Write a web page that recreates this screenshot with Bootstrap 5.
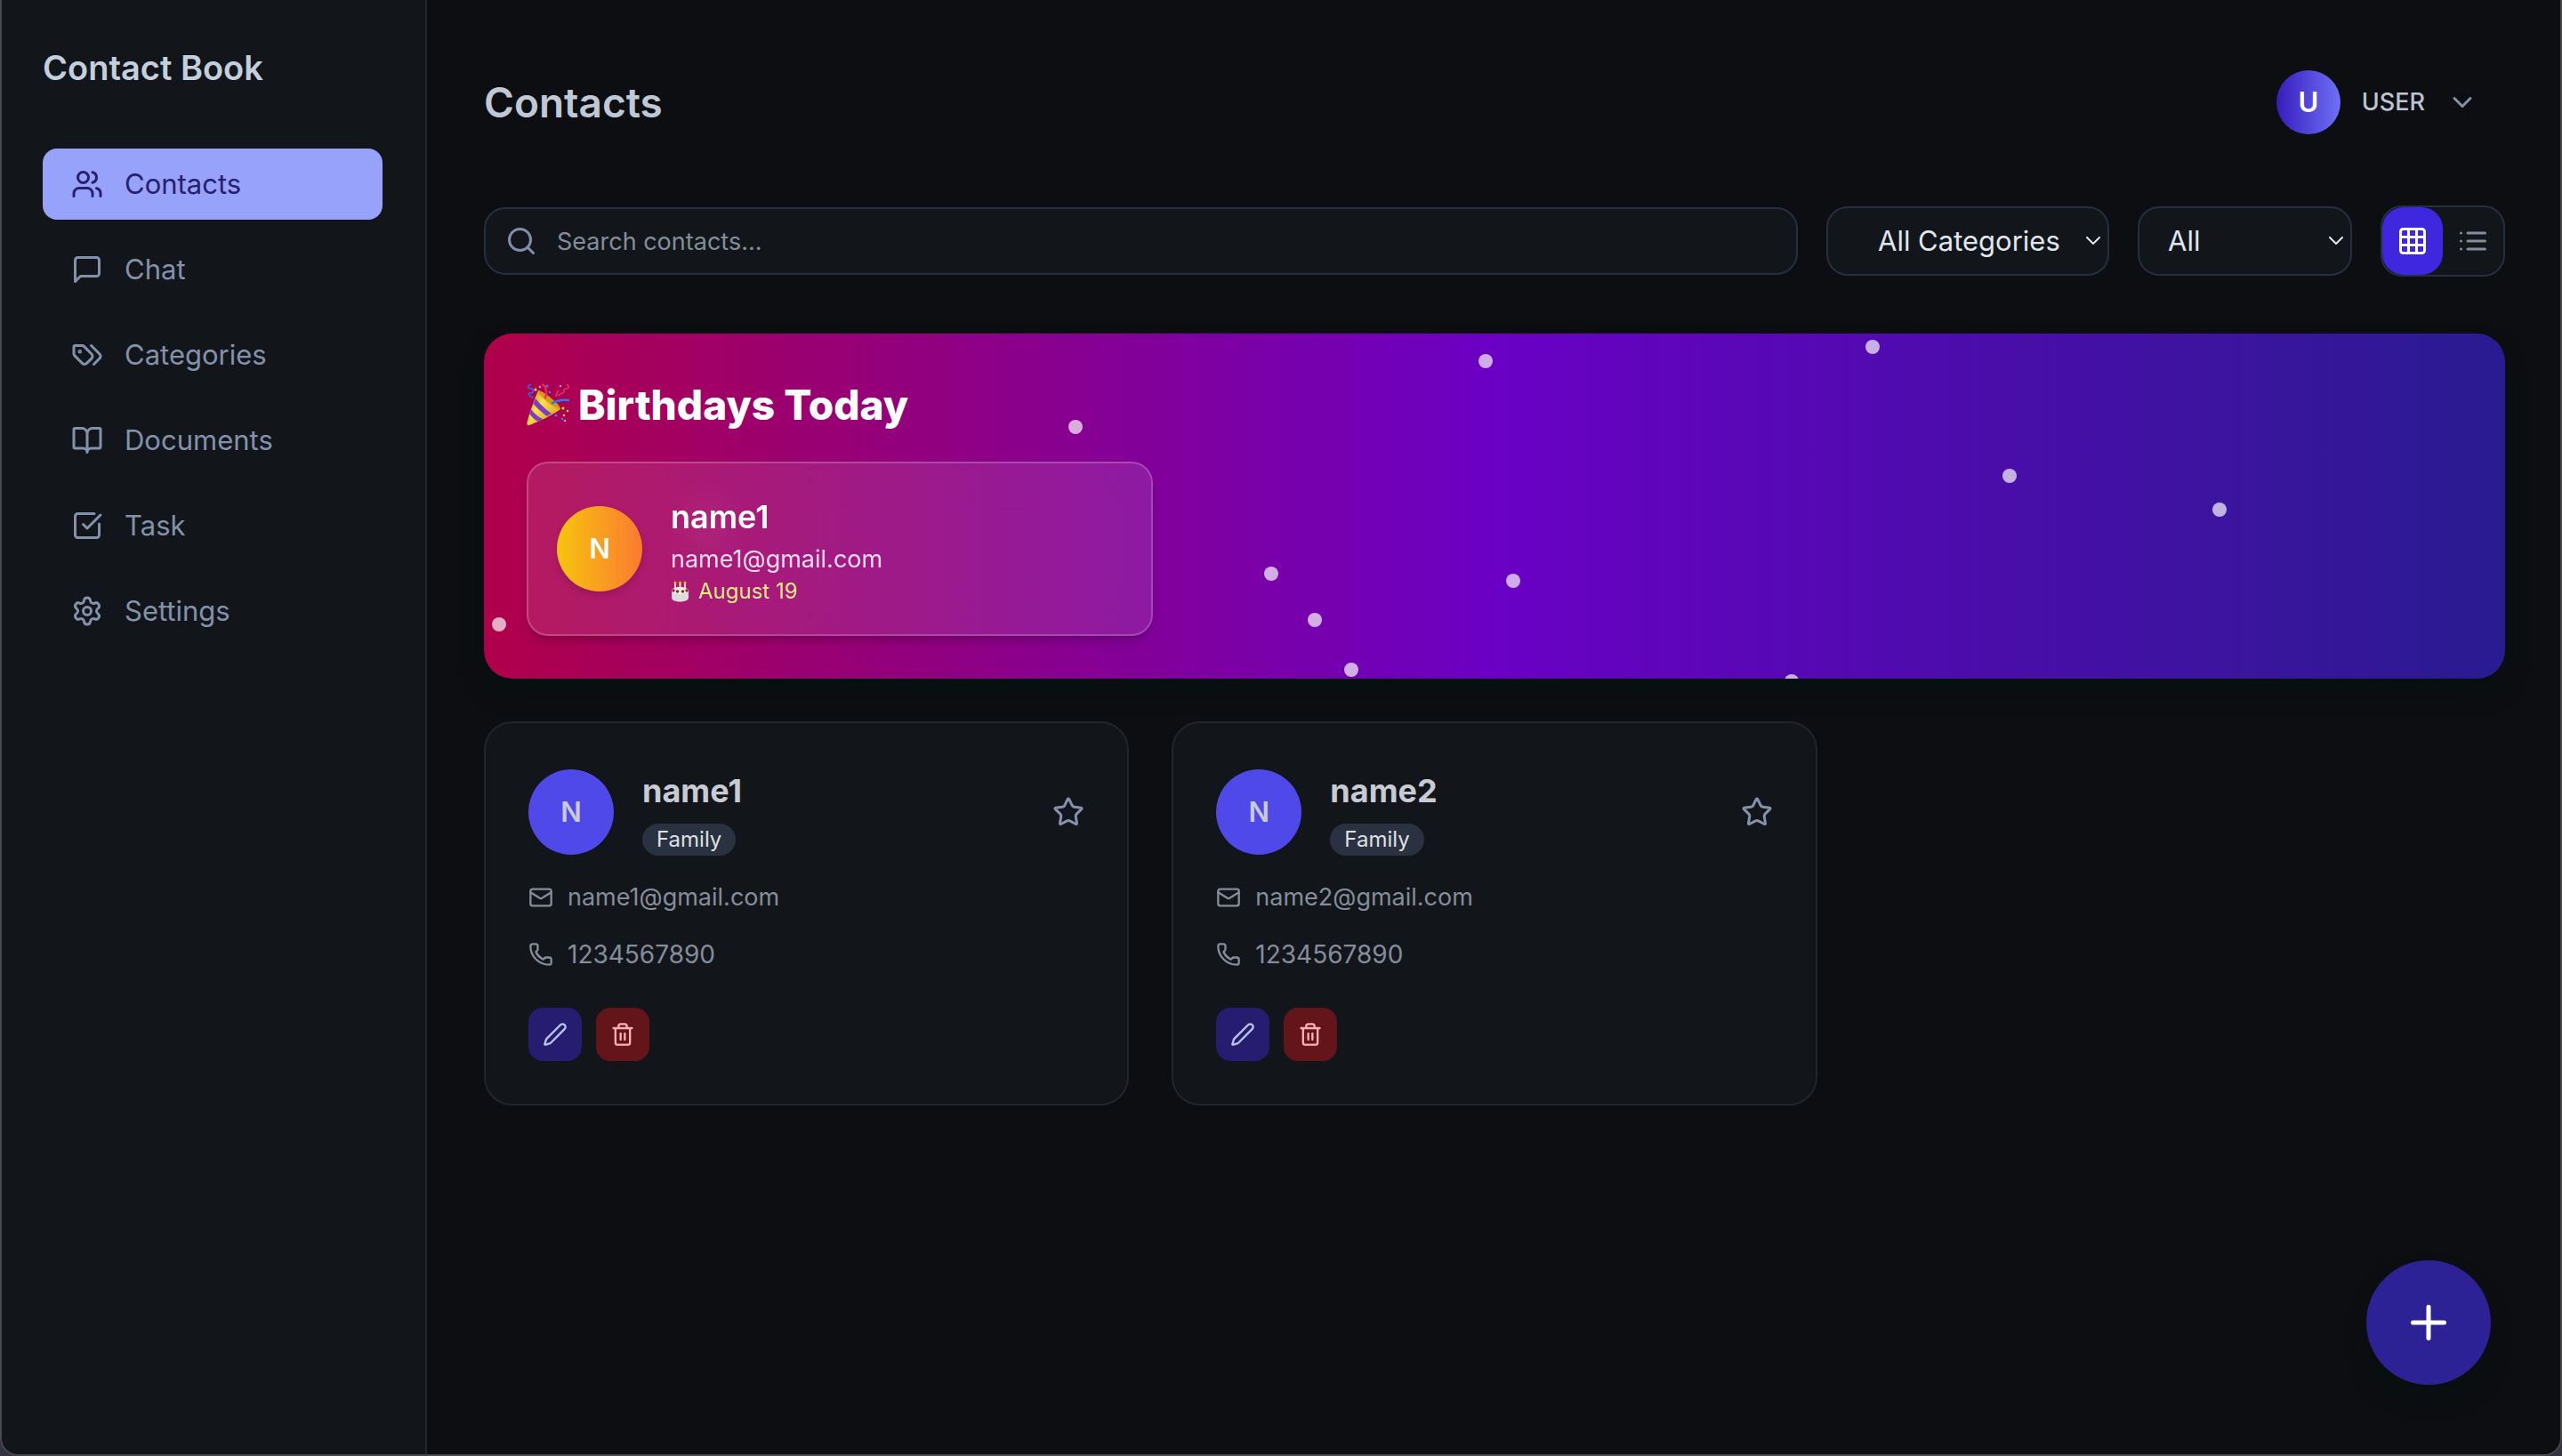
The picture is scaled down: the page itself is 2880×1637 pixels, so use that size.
<!DOCTYPE html>
<html lang="en" data-bs-theme="dark">
<head>
<meta charset="utf-8">
<meta name="viewport" content="width=device-width, initial-scale=1">
<title>Contact Book</title>
<link href="https://cdn.jsdelivr.net/npm/bootstrap@5.3.0/dist/css/bootstrap.min.css" rel="stylesheet">
<style>
  :root {
    --page: #0d0e11;
    --panel: #12161a;
    --line: #22262b;
    --field-line: #252f40;
    --muted: #8391ab;
    --soft: #858d9b;
    --t-sm: 24px;
    --t-mail: 27px;
    --t-md: 28px;
    --t-lg: 31px;
    --t-xl: 36px;
  }
  body { background: var(--page); color: #c3cddb; font-family: Inter, "Noto Sans", sans-serif; font-size: var(--t-md); line-height: 40px; min-height: 100vh; }
  svg { display: block; flex: none; }
  .ico { width: 36px; height: 36px; fill: none; stroke: currentColor; stroke-width: 2; stroke-linecap: round; stroke-linejoin: round; }
  .ico-sm { width: 28px; height: 28px; }
  .ico-xl { width: 60px; height: 60px; }
  .window-edge { position: fixed; inset: -2px 0 0 0; border: 2px solid #47494d; border-radius: 0 0 20px 20px; box-shadow: 0 0 0 20px #34333f; pointer-events: none; z-index: 20; }

  .sidebar { flex: 0 0 480px; background: var(--panel); border-right: 2px solid var(--line); padding: 48px; }
  .brand { font-size: 38px; line-height: 56px; font-weight: 600; margin: 0 0 63px; color: #c3cfdd; }
  .side-nav { gap: 16px; }
  .side-nav .nav-link { display: flex; align-items: center; gap: 24px; height: 80px; padding: 0 32px; border-radius: 16px; color: var(--muted); font-size: var(--t-lg); }
  .side-nav .nav-link.active { background: #97a2fb; color: #26206e; }

  .content { padding: 47px 64px 64px; min-width: 0; }
  .page-title { font-size: 46px; line-height: 64px; font-weight: 600; color: #bfc8d5; }
  .user-btn { padding: 32px 30px; gap: 24px; color: #bcc5d2; font-size: var(--t-mail); font-weight: 500; line-height: 40px; border: 0; }
  .user-btn .ico { color: #8391ab; }
  .disc { display: flex; align-items: center; justify-content: center; flex: none; border-radius: 50%; width: 96px; height: 96px; font-weight: 600; font-size: var(--t-lg); }
  .disc-user { width: 72px; height: 72px; color: #fff; background: linear-gradient(to right, #371cbc, #6e70f7); }
  .disc-gold { color: #fff; background: linear-gradient(to right, #f8c40f, #fa7a30); box-shadow: 0 4px 8px rgba(0,0,0,.15); }
  .disc-main { color: #c8cbd4; background: #5049ea; }

  .toolbar { gap: 32px; margin: 48px 0 64px; height: 80px; }
  .search-ico { position: absolute; left: 24px; top: 20px; color: #7f8eac; }
  .search-box { height: 76px; background: var(--panel); border: 2px solid var(--field-line); border-radius: 24px; padding: 0 32px 0 80px; font-size: var(--t-mail); color: #dfe5ee; }
  .search-box::placeholder { color: #858d9b; opacity: 1; }
  .pick { flex: none; height: 78px; padding: 0 32px; border: 2px solid var(--field-line); border-radius: 24px; font-size: var(--t-lg); color: #e0e6ee;
    background-color: var(--panel); background-size: 18px 10px; background-position: right 7px center;
    background-image: url("data:image/svg+xml,%3csvg xmlns='http://www.w3.org/2000/svg' viewBox='0 0 18 10'%3e%3cpath fill='none' stroke='%23e0e6ee' stroke-width='2' stroke-linecap='round' stroke-linejoin='round' d='m2 1 7 7 7-7'/%3e%3c/svg%3e"); }
  .pick-cat { width: 318px; padding-left: 56px; }
  .pick-kind { width: 241px; }
  .view-toggle { background: var(--panel); border: 2px solid var(--field-line); border-radius: 24px; flex: none; }
  .view-btn { width: 68px; height: 76px; padding: 0; border: 0; border-radius: 24px; color: #858d9b; display: flex; align-items: center; justify-content: center; }
  .view-btn.active { background: #3e27df; color: #fff; }

  .birthday { position: relative; overflow: hidden; border-radius: 32px; padding: 48px; background: linear-gradient(to right, #b0004a, #6a00c4, #291b90); }
  .glow { border-radius: 32px; margin-bottom: 48px; box-shadow: 0 16px 24px -2px rgba(2,18,18,.5); }
  .birthday h2 { font-size: 46px; line-height: 64px; font-weight: 800; color: #fff; margin: 0 0 32px; display: flex; align-items: center; gap: 10px; }
  .spark { position: absolute; width: 16px; height: 16px; margin: -8px 0 0 -8px; border-radius: 50%; background: rgba(255,255,255,.68); }
  .tiles { display: grid; grid-template-columns: repeat(3, minmax(0, 1fr)); gap: 48px; }
  .birthday .tiles { gap: 32px; }
  .party { gap: 32px; padding: 32px; border: 2px solid rgba(255,255,255,.2); border-radius: 24px; background: rgba(255,255,255,.1); backdrop-filter: blur(24px); box-shadow: 0 8px 12px -4px rgba(0,0,0,.25); color: #fff; }
  .person { font-size: var(--t-xl); line-height: 56px; font-weight: 600; margin: 0; }
  .mail { font-size: var(--t-mail); }
  .party .mail { color: #f3dcec; }
  .party .date { font-size: var(--t-sm); line-height: 32px; color: #fff085; gap: 10px; }

  .contact { background: var(--panel); border: 2px solid var(--line); border-radius: 32px; }
  .contact .card-body { padding: 48px; }
  .contact .person { color: #c8cbd4; font-weight: 700; }
  .head { gap: 32px; }
  .tag { display: block; width: max-content; margin: 9px 0 3px; padding: 0 16px; border-radius: 18px; background: #2a3140; color: #dfe0e4; font-size: var(--t-sm); line-height: 36px; }
  .info { gap: 16px; color: var(--soft); }
  .star { padding: 0; border: 0; color: #8391ab; }
  .acts { margin-top: 40px; }
  .act { width: 60px; height: 60px; padding: 0; border: 0; border-radius: 16px; display: flex; align-items: center; justify-content: center; }
  .act-edit { background: #261c70; color: #bac5ff; }
  .act-del { background: #63151a; color: #ffb4b4; }
  .fab { position: fixed; right: 80px; bottom: 80px; width: 140px; height: 140px; padding: 0; border: 0; border-radius: 50%; background: #2d2295; color: #fff; display: flex; align-items: center; justify-content: center; box-shadow: 0 16px 24px -4px rgba(2,18,18,.5); z-index: 10; }
</style>
<script src="https://cdn.jsdelivr.net/npm/bootstrap@5.3.0/dist/js/bootstrap.bundle.min.js"></script>
</head>
<body class="d-flex">
<svg width="0" height="0" class="position-absolute" aria-hidden="true">
  <symbol id="i-users" viewBox="0 0 24 24"><path d="M16 21v-2a4 4 0 0 0-4-4H6a4 4 0 0 0-4 4v2M16 3.128a4 4 0 0 1 0 7.744M22 21v-2a4 4 0 0 0-3-3.870"/><circle cx="9" cy="7" r="4"/></symbol>
  <symbol id="i-chat" viewBox="0 0 24 24"><path d="M21 15a2 2 0 0 1-2 2H7l-4 4V5a2 2 0 0 1 2-2h14a2 2 0 0 1 2 2z"/></symbol>
  <symbol id="i-tags" viewBox="0 0 24 24"><path d="m15 5 6.300 6.300a2.400 2.400 0 0 1 0 3.400L17 19"/><path d="M9.586 5.586A2 2 0 0 0 8.172 5H3a1 1 0 0 0-1 1v5.172a2 2 0 0 0 .586 1.414L8.290 18.290a2.426 2.426 0 0 0 3.420 0l3.580-3.580a2.426 2.426 0 0 0 0-3.420z"/><circle cx="6.500" cy="9.500" r=".5" fill="currentColor"/></symbol>
  <symbol id="i-book" viewBox="0 0 24 24"><path d="M12 7v14M3 18a1 1 0 0 1-1-1V4a1 1 0 0 1 1-1h5a4 4 0 0 1 4 4 4 4 0 0 1 4-4h5a1 1 0 0 1 1 1v13a1 1 0 0 1-1 1h-6a3 3 0 0 0-3 3 3 3 0 0 0-3-3z"/></symbol>
  <symbol id="i-task" viewBox="0 0 24 24"><path d="M21 10.656V19a2 2 0 0 1-2 2H5a2 2 0 0 1-2-2V5a2 2 0 0 1 2-2h12.344M9 11l3 3L22 4"/></symbol>
  <symbol id="i-gear" viewBox="0 0 24 24"><path d="M9.671 4.136a2.340 2.340 0 0 1 4.659 0 2.340 2.340 0 0 0 3.319 1.915 2.340 2.340 0 0 1 2.330 4.033 2.340 2.340 0 0 0 0 3.831 2.340 2.340 0 0 1-2.330 4.033 2.340 2.340 0 0 0-3.319 1.915 2.340 2.340 0 0 1-4.659 0 2.340 2.340 0 0 0-3.320-1.915 2.340 2.340 0 0 1-2.330-4.033 2.340 2.340 0 0 0 0-3.831A2.340 2.340 0 0 1 6.350 6.051a2.340 2.340 0 0 0 3.319-1.915"/><circle cx="12" cy="12" r="3"/></symbol>
  <symbol id="i-search" viewBox="0 0 24 24"><circle cx="11" cy="11" r="8"/><path d="m21 21-4.340-4.340"/></symbol>
  <symbol id="i-down" viewBox="0 0 24 24"><path d="m6 9 6 6 6-6"/></symbol>
  <symbol id="i-grid" viewBox="0 0 24 24"><rect x="3" y="3" width="18" height="18" rx="2"/><path d="M3 9h18M3 15h18M9 3v18M15 3v18"/></symbol>
  <symbol id="i-list" viewBox="0 0 24 24"><path d="M3 6h.01M3 12h.01M3 18h.01M8 6h13M8 12h13M8 18h13"/></symbol>
  <symbol id="i-star" viewBox="0 0 24 24"><path d="M11.525 2.295a.53.53 0 0 1 .95 0l2.310 4.679a2.123 2.123 0 0 0 1.595 1.160l5.166.756a.53.53 0 0 1 .294.904l-3.736 3.638a2.123 2.123 0 0 0-.611 1.878l.882 5.140a.53.53 0 0 1-.771.560l-4.618-2.428a2.122 2.122 0 0 0-1.973 0L6.396 21.010a.53.53 0 0 1-.77-.560l.881-5.139a2.122 2.122 0 0 0-.611-1.879L2.160 9.795a.53.53 0 0 1 .294-.906l5.165-.755a2.122 2.122 0 0 0 1.597-1.160z"/></symbol>
  <symbol id="i-mail" viewBox="0 0 24 24"><rect x="2" y="4" width="20" height="16" rx="2"/><path d="m22 7-8.991 5.727a2 2 0 0 1-2.009 0L2 7"/></symbol>
  <symbol id="i-phone" viewBox="0 0 24 24"><path d="M13.832 16.568a1 1 0 0 0 1.213-.303l.355-.465A2 2 0 0 1 17 15h3a2 2 0 0 1 2 2v3a2 2 0 0 1-2 2A18 18 0 0 1 2 4a2 2 0 0 1 2-2h3a2 2 0 0 1 2 2v3a2 2 0 0 1-.8 1.600l-.468.351a1 1 0 0 0-.292 1.233 14 14 0 0 0 6.392 6.384"/></symbol>
  <symbol id="i-pen" viewBox="0 0 24 24"><path d="M21.174 6.812a1 1 0 0 0-3.986-3.987L3.842 16.174a2 2 0 0 0-.5.83l-1.321 4.352a.5.5 0 0 0 .623.622l4.353-1.320a2 2 0 0 0 .83-.497z"/></symbol>
  <symbol id="i-trash" viewBox="0 0 24 24"><path d="M10 11v6M14 11v6M19 6v14a2 2 0 0 1-2 2H7a2 2 0 0 1-2-2V6M3 6h18M8 6V4a2 2 0 0 1 2-2h4a2 2 0 0 1 2 2v2"/></symbol>
  <symbol id="i-plus" viewBox="0 0 24 24"><path d="M5 12h14M12 5v14"/></symbol>
</svg>

<aside class="sidebar">
  <p class="brand">Contact Book</p>
  <nav aria-label="Main">
    <ul class="nav flex-column side-nav">
      <li><a class="nav-link active" aria-current="page" href="#"><svg class="ico"><use href="#i-users"/></svg><span>Contacts</span></a></li>
      <li><a class="nav-link" href="#"><svg class="ico"><use href="#i-chat"/></svg><span>Chat</span></a></li>
      <li><a class="nav-link" href="#"><svg class="ico"><use href="#i-tags"/></svg><span>Categories</span></a></li>
      <li><a class="nav-link" href="#"><svg class="ico"><use href="#i-book"/></svg><span>Documents</span></a></li>
      <li><a class="nav-link" href="#"><svg class="ico"><use href="#i-task"/></svg><span>Task</span></a></li>
      <li><a class="nav-link" href="#"><svg class="ico"><use href="#i-gear"/></svg><span>Settings</span></a></li>
    </ul>
  </nav>
</aside>

<main class="content flex-grow-1">
  <header class="d-flex align-items-center justify-content-between">
    <h1 class="page-title m-0">Contacts</h1>
    <button type="button" class="btn user-btn d-flex align-items-center">
      <span class="disc disc-user">U</span>
      <span>USER</span>
      <svg class="ico"><use href="#i-down"/></svg>
    </button>
  </header>

  <form class="toolbar d-flex align-items-center">
    <div class="position-relative flex-grow-1">
      <svg class="ico search-ico"><use href="#i-search"/></svg>
      <input type="text" class="form-control search-box" aria-label="Search contacts" placeholder="Search contacts...">
    </div>
    <select class="form-select pick pick-cat" aria-label="Category"><option>All Categories</option></select>
    <select class="form-select pick pick-kind" aria-label="Show"><option>All</option></select>
    <div class="view-toggle d-flex" role="group" aria-label="View">
      <button type="button" class="btn view-btn active" aria-label="Grid view"><svg class="ico"><use href="#i-grid"/></svg></button>
      <button type="button" class="btn view-btn" aria-label="List view"><svg class="ico"><use href="#i-list"/></svg></button>
    </div>
  </form>

  <div class="glow">
  <section class="birthday">
    <i class="spark" style="left:0.75%;top:84.3%"></i>
    <i class="spark" style="left:11%;top:55.4%"></i>
    <i class="spark" style="left:29.27%;top:27.1%"></i>
    <i class="spark" style="left:38.95%;top:69.6%"></i>
    <i class="spark" style="left:41.1%;top:83.1%"></i>
    <i class="spark" style="left:42.92%;top:97.4%"></i>
    <i class="spark" style="left:49.56%;top:8%"></i>
    <i class="spark" style="left:50.92%;top:71.6%"></i>
    <i class="spark" style="left:64.7%;top:100.8%"></i>
    <i class="spark" style="left:68.7%;top:3.9%"></i>
    <i class="spark" style="left:75.48%;top:41.2%"></i>
    <i class="spark" style="left:85.87%;top:51%"></i>
    <h2>
      <svg width="48" height="48" viewBox="0 0 48 48" aria-hidden="true">
        <defs><linearGradient id="cone" x1="0" y1="0" x2="1" y2="1"><stop offset="0" stop-color="#b98a12"/><stop offset=".4" stop-color="#ffe04a"/><stop offset="1" stop-color="#c98f14"/></linearGradient></defs>
        <path d="M13 8C17 9 36 24 38 29c-6 5-24 14-35 18-2 1-3-1-2.500-3C3 34 9 17 13 8z" fill="url(#cone)"/>
        <path d="M10 17c5 6 12 13 18 17l-5 3C17 33 11 27 7.500 23zM5 29c3 4 8 9 13 11l-5 3C9 41 5 37 3 34z" fill="#7b3fc4"/>
        <path d="M13 8c5 0 26 16 25 21-5-1-12-5-17-10-4-4-9-8-8-11z" fill="#d89a1c"/>
        <path d="M28 23c5-4 12-5 20-4" fill="none" stroke="#2f7af0" stroke-width="2.500"/>
        <path d="M17 1c5 2 6 8 4 16" fill="none" stroke="#f0285a" stroke-width="2.200"/>
        <path d="M5 1c-5 2-4 5 0 5s3 5-1 5 0 5 4 5" fill="none" stroke="#2f6be8" stroke-width="1.600"/>
        <path d="M45 1c4 3 2 5-1 5s-1 5-4 5-2 3-5 2M36 8c-2 2-3 4-3 7" fill="none" stroke="#e0305c" stroke-width="1.600"/>
        <g fill="#3a80f5"><circle cx="23" cy="3" r="1.500"/><circle cx="26" cy="10" r="1.300"/><circle cx="33" cy="36" r="1.500"/><circle cx="40" cy="40" r="1.200"/></g>
        <g fill="#ffe03a"><circle cx="10" cy="7" r="1.500"/><circle cx="41" cy="28" r="1.500"/><circle cx="46" cy="31" r="1.300"/><circle cx="42" cy="36" r="1.300"/></g>
        <g fill="#ff8fc0"><circle cx="15" cy="4" r="1.200"/><circle cx="38" cy="3" r="1.200"/><circle cx="43" cy="42" r="1.300"/></g>
      </svg>
      <span>Birthdays Today</span>
    </h2>
    <div class="tiles">
      <article class="party d-flex align-items-center">
        <span class="disc disc-gold">N</span>
        <div>
          <h3 class="person">name1</h3>
          <div class="mail">name1@gmail.com</div>
          <div class="date d-flex align-items-center">
            <svg width="21" height="24" viewBox="0 0 21 24" aria-hidden="true">
              <path d="M1 11v8c0 6 19 6 19 0v-8z" fill="#dcdcd8"/><ellipse cx="10.500" cy="11" rx="9.500" ry="4" fill="#f7f7f4"/>
              <path d="M5 2v9M10.500 2v10M16 2v9" stroke="#f3e3c0" stroke-width="2"/>
              <g fill="#f6b21a"><circle cx="5" cy="2" r="1.500"/><circle cx="10.500" cy="2" r="1.500"/><circle cx="16" cy="2" r="1.500"/></g>
              <g fill="#a3172c"><circle cx="3" cy="11" r="1.700"/><circle cx="7.500" cy="12" r="1.700"/><circle cx="13.500" cy="12" r="1.700"/><circle cx="18" cy="11" r="1.700"/></g>
            </svg>
            <span>August 19</span>
          </div>
        </div>
      </article>
    </div>
  </section>
  </div>

  <section class="tiles" aria-label="Contact list">
    <article class="card contact">
      <div class="card-body">
        <div class="d-flex align-items-center mb-4 head">
          <span class="disc disc-main">N</span>
          <div class="flex-grow-1"><h3 class="person">name1</h3><span class="tag">Family</span></div>
          <button type="button" class="btn star" aria-label="Favourite name1"><svg class="ico"><use href="#i-star"/></svg></button>
        </div>
        <div class="info d-flex align-items-center mb-4"><svg class="ico ico-sm"><use href="#i-mail"/></svg><span class="mail">name1@gmail.com</span></div>
        <div class="info d-flex align-items-center"><svg class="ico ico-sm"><use href="#i-phone"/></svg><span>1234567890</span></div>
        <div class="d-flex gap-3 acts">
          <button type="button" class="btn act act-edit" aria-label="Edit name1"><svg class="ico ico-sm"><use href="#i-pen"/></svg></button>
          <button type="button" class="btn act act-del" aria-label="Delete name1"><svg class="ico ico-sm"><use href="#i-trash"/></svg></button>
        </div>
      </div>
    </article>
    <article class="card contact">
      <div class="card-body">
        <div class="d-flex align-items-center mb-4 head">
          <span class="disc disc-main">N</span>
          <div class="flex-grow-1"><h3 class="person">name2</h3><span class="tag">Family</span></div>
          <button type="button" class="btn star" aria-label="Favourite name2"><svg class="ico"><use href="#i-star"/></svg></button>
        </div>
        <div class="info d-flex align-items-center mb-4"><svg class="ico ico-sm"><use href="#i-mail"/></svg><span class="mail">name2@gmail.com</span></div>
        <div class="info d-flex align-items-center"><svg class="ico ico-sm"><use href="#i-phone"/></svg><span>1234567890</span></div>
        <div class="d-flex gap-3 acts">
          <button type="button" class="btn act act-edit" aria-label="Edit name2"><svg class="ico ico-sm"><use href="#i-pen"/></svg></button>
          <button type="button" class="btn act act-del" aria-label="Delete name2"><svg class="ico ico-sm"><use href="#i-trash"/></svg></button>
        </div>
      </div>
    </article>
  </section>
</main>

<button type="button" class="btn fab" aria-label="Add contact"><svg class="ico ico-xl"><use href="#i-plus"/></svg></button>
<div class="window-edge"></div>
</body>
</html>
